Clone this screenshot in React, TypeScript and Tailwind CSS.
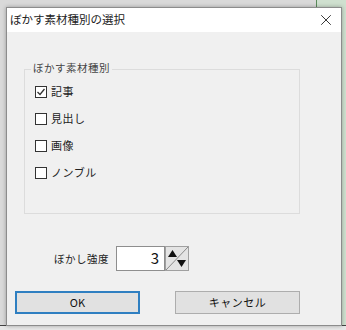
import { X } from 'lucide-react';

const font = { fontFamily: '"Noto Sans CJK JP", "Noto Sans", sans-serif' };

function Check({ checked, label }: { checked?: boolean; label: string }) {
  return (
    <div className="flex items-center h-[13px]">
      <div className="w-[12px] h-[12px] border border-[#333] bg-white flex items-center justify-center">
        {checked && (
          <svg width="10" height="10" viewBox="0 0 10 10">
            <path d="M1.5 5 L4 7.5 L8.5 2" fill="none" stroke="#333" strokeWidth="1.3" />
          </svg>
        )}
      </div>
      <span className="ml-[4px] text-[11px] tracking-[0.5px] text-[#222] leading-none whitespace-nowrap">{label}</span>
    </div>
  );
}

function Spinner() {
  return (
    <svg width="24" height="25" viewBox="0 0 24 25" className="block">
      <rect x="0.5" y="0.5" width="23" height="24" fill="#e4e4e4" stroke="#a0a0a0" />
      <line x1="1" y1="24" x2="23" y2="1" stroke="#8a8a8a" strokeWidth="1" />
      <path d="M3 11 L7.5 4 L12 11 Z" fill="#111" />
      <path d="M12 14 L21 14 L16.5 21 Z" fill="#111" />
    </svg>
  );
}

export default function App() {
  return (
    <div className="relative w-[346px] h-[330px] overflow-hidden bg-[#d9d9d9]" style={font}>
      {/* desktop behind */}
      <div className="absolute right-0 top-0 w-[30px] h-[330px] bg-[#cfe0cf] border-l border-[#5a8a5a]" />
      <div className="absolute left-0 bottom-0 w-[346px] h-[5px] bg-[#e8e8e8] border-t border-[#444]" />

      <div className="absolute left-[6px] top-[7px] w-[336px] h-[319px] flex flex-col border border-[#8c8c8c] bg-[#f0f0f0] shadow-[0_0_4px_rgba(0,0,0,0.3)]">
        <div className="h-[24px] bg-white flex items-center justify-between pl-[3px] pr-[6px]">
          <span className="text-[11.5px] text-[#222] whitespace-nowrap">ぼかす素材種別の選択</span>
          <X size={18} strokeWidth={1.2} color="#222" />
        </div>

        <div className="flex-1 flex flex-col">
          <div className="mt-[37px] ml-[17px] w-[276px] h-[145px] border border-[#dcdcdc] relative">
            <span className="absolute -top-[7px] left-[6px] bg-[#f0f0f0] px-[2px] text-[10.5px] tracking-[0.5px] text-[#444] leading-none whitespace-nowrap">
              ぼかす素材種別
            </span>
            <div className="flex flex-col gap-[14px] pl-[10px] pt-[15px]">
              <Check checked label="記事" />
              <Check label="見出し" />
              <Check label="画像" />
              <Check label="ノンブル" />
            </div>
          </div>

          <div className="flex items-center mt-[32px] ml-[47px]">
            <span className="text-[10.5px] tracking-[0.5px] text-[#222] w-[62px] whitespace-nowrap">ぼかし強度</span>
            <div className="w-[49px] h-[25px] bg-white border border-[#8e8e8e] flex items-center justify-end pr-[5px] text-[15px] text-[#111]">
              3
            </div>
            <Spinner />
          </div>

          <div className="flex mt-[20px] ml-[8px] gap-[35px]">
            <button className="w-[125px] h-[23px] bg-[#e1e1e1] border-2 border-[#2f7fc1] text-[11px] text-[#111]">
              OK
            </button>
            <button className="w-[125px] h-[23px] bg-[#e1e1e1] border border-[#adadad] text-[11px] text-[#111] tracking-[0.5px]">
              キャンセル
            </button>
          </div>
        </div>
      </div>
    </div>
  );
}
